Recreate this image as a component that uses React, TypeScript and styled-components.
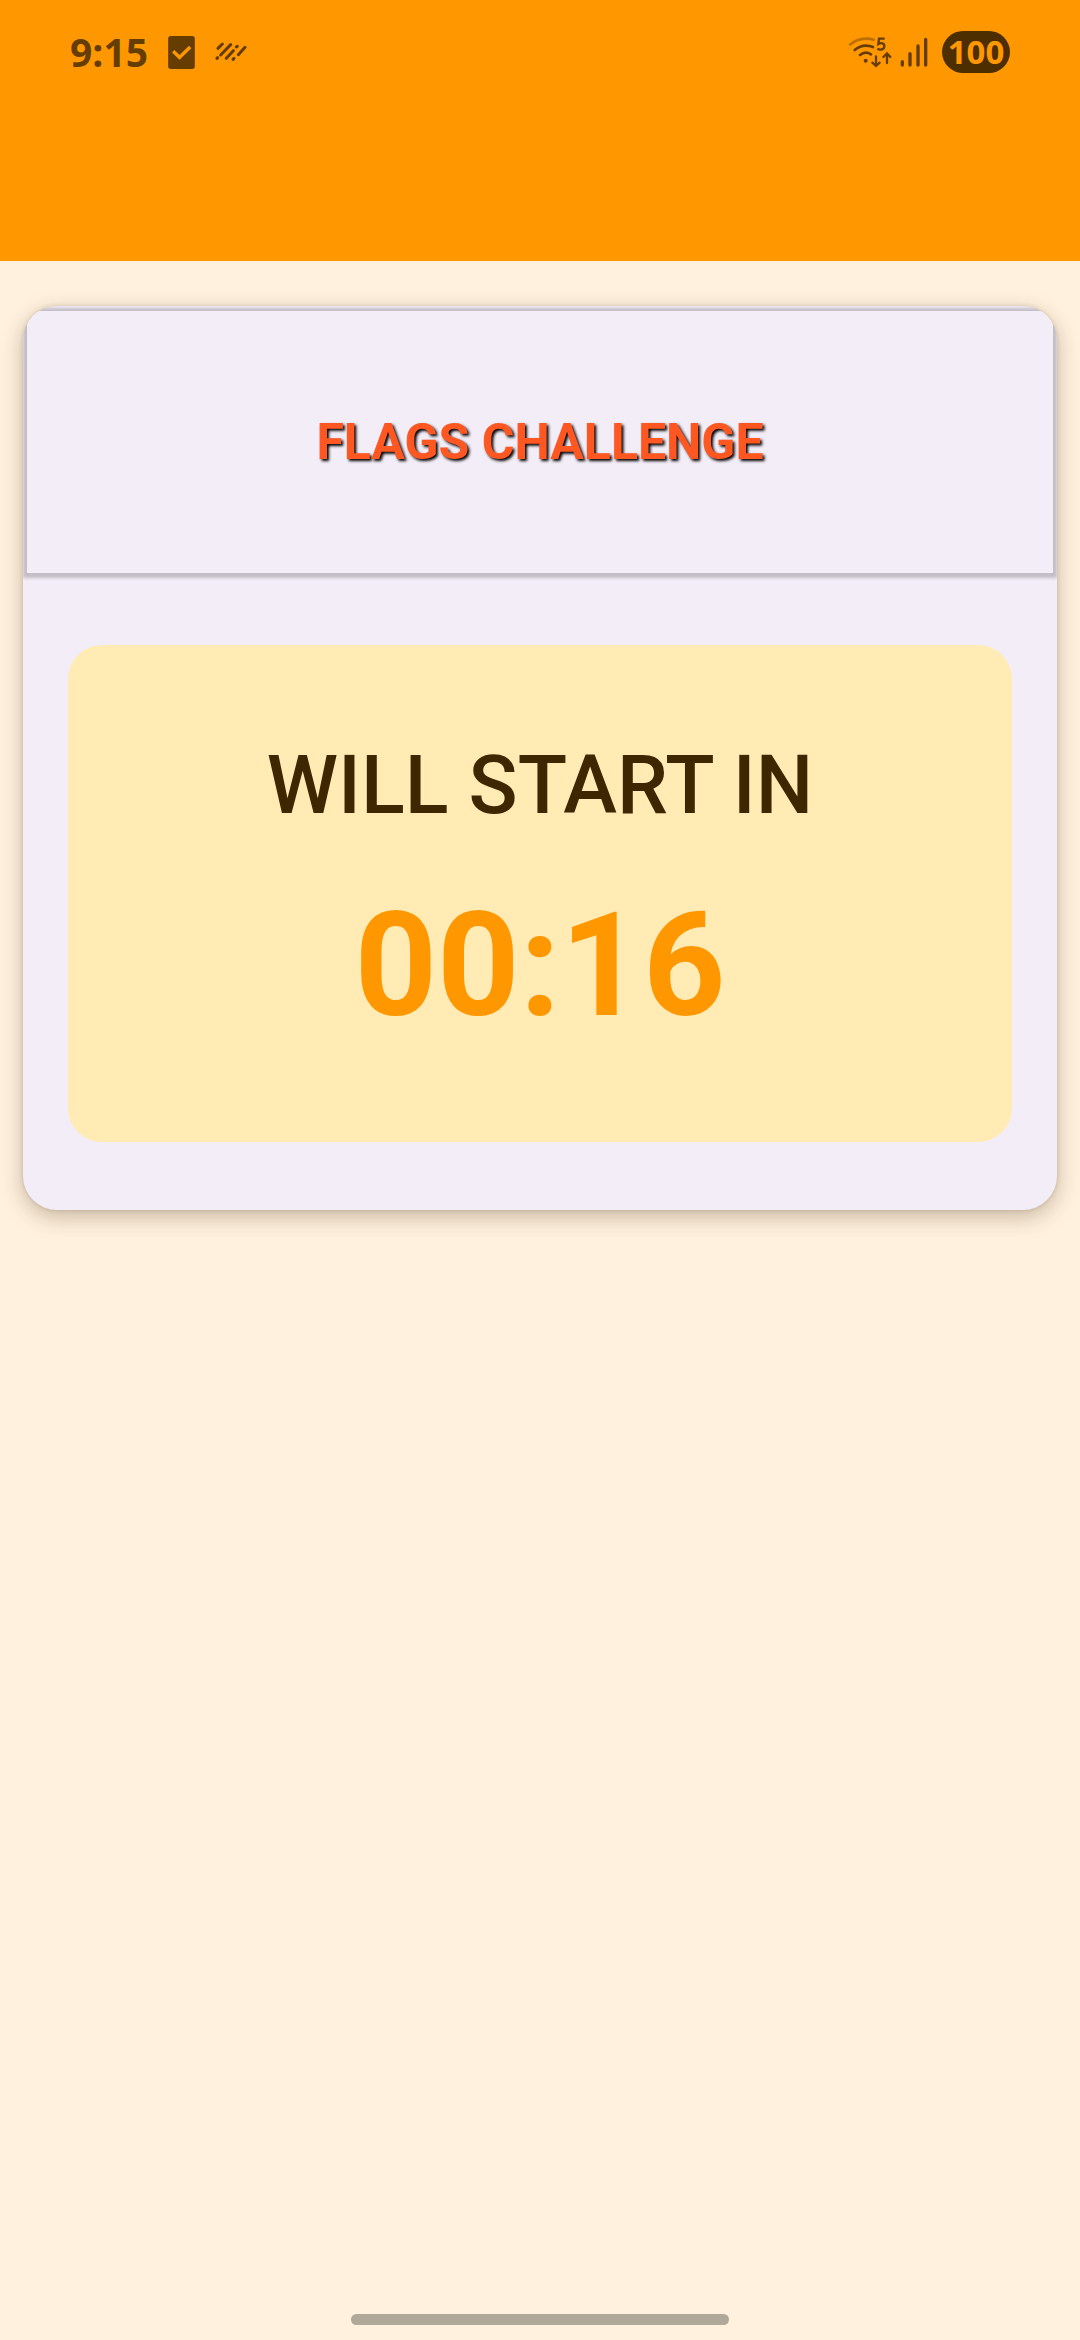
import React from "react";
import styled, { createGlobalStyle } from "styled-components";

const GlobalStyle = createGlobalStyle`
  * { box-sizing: border-box; }
  html, body, #root { height: 100%; }
  body { margin: 0; background: #fff1de; font-family: Roboto, sans-serif; }
`;

const Screen = styled.div`
  min-height: 100%;
  display: flex;
  flex-direction: column;
  background: #fff1de;
`;

const AppBar = styled.header`
  height: 261px;
  background: #ff9800;
`;

const StatusBar = styled.div`
  display: flex;
  align-items: center;
  justify-content: space-between;
  height: 104px;
  padding: 0 70px;
`;

const StatusGroup = styled.div<{ $gap: number }>`
  display: flex;
  align-items: center;
  gap: ${(p) => p.$gap}px;
  color: #663d00;
`;

const Clock = styled.time`
  font: 700 39px/44px "Open Sans", sans-serif;
`;

const Battery = styled.span`
  display: flex;
  align-items: center;
  justify-content: center;
  width: 68px;
  height: 42px;
  margin-left: 6px;
  border-radius: 21px;
  background: #4d2e00;
  color: #ff9800;
  font: 700 33px/42px "Open Sans", sans-serif;
`;

const Content = styled.main`
  flex: 1;
  padding: 45px 23px;
`;

const Card = styled.section`
  overflow: hidden;
  padding: 5px 0 68px;
  border-radius: 34px;
  background: #f3edf7;
  box-shadow: 0 7px 22px rgba(60, 40, 10, 0.28), 0 0 4px rgba(60, 40, 10, 0.16);
`;

const CardHeader = styled.div`
  display: flex;
  align-items: center;
  justify-content: center;
  height: 262px;
  margin: 0 4px;
  background: #f3edf7;
  box-shadow: 0 1px 3px 4px rgba(20, 15, 20, 0.21);
`;

const Title = styled.h1`
  margin: 0;
  color: #ff5722;
  font-size: 50px;
  font-weight: 700;
  line-height: 60px;
  text-shadow: 2px 2px 3px #000;
`;

const Panel = styled.div`
  display: flex;
  flex-direction: column;
  align-items: center;
  gap: 48px;
  margin: 72px 45px 0;
  padding: 93px 24px 92px;
  border-radius: 34px;
  background: #ffebb3;
`;

const Caption = styled.p`
  margin: 0;
  color: #3e2700;
  font-size: 81px;
  font-weight: 500;
  line-height: 96px;
`;

const Timer = styled.time`
  color: #ff9800;
  font-size: 144px;
  font-weight: 700;
  line-height: 168px;
`;

const NavArea = styled.footer`
  display: flex;
  justify-content: center;
  padding-bottom: 15px;
`;

const NavHandle = styled.div`
  width: 35%;
  height: 11px;
  border-radius: 6px;
  background: #b0a899;
`;

const TaskIcon = () => (
  <svg width="27" height="33" viewBox="0 0 80 99" aria-hidden="true">
    <rect width="80" height="99" rx="8" fill="currentColor" />
    <path d="M15 46 L34 64 L66 33" fill="none" stroke="#ff9800" strokeWidth="10" />
  </svg>
);

const StripesIcon = () => (
  <svg width="32" height="20" viewBox="494 101 96 60" aria-hidden="true">
    <g stroke="currentColor" strokeWidth="9" strokeLinecap="round">
      <path d="M503 120 L516 107 M500 150 L502 148 M511 140 L541 109 M528 150 L549 127 M558 116 L561 114 M548 153 L551 150 M564 139 L584 117" />
    </g>
  </svg>
);

const WifiIcon = () => (
  <svg width="44" height="32" viewBox="54 80 132 96" aria-hidden="true">
    <g fill="none" stroke="currentColor" strokeWidth="8" strokeLinecap="round">
      <path d="M58 108 Q90 79 134 92" opacity="0.45" strokeLinecap="butt" />
      <path d="M74 122 Q99 101 129 113" />
      <path d="M90 137 Q106 124 123 135" />
      <path d="M164 88 H147 L145 104 C153 99 164 102 163 111 C162 122 149 123 142 118" strokeWidth="7" strokeLinecap="butt" />
      <path d="M138 141 V169 M127 160 L138 170 L149 160 M171 161 V133 M160 143 L171 132 L181 143" strokeWidth="7" />
    </g>
    <circle cx="107" cy="154" r="6" fill="currentColor" />
  </svg>
);

const SignalIcon = () => (
  <svg width="28" height="30" viewBox="212 79 84 90" aria-hidden="true">
    <g stroke="currentColor" strokeWidth="10" strokeLinecap="round">
      <path d="M219 153 V163 M242 129 V163 M266 106 V163 M289 86 V163" />
    </g>
  </svg>
);

export default function App() {
  return (
    <>
      <GlobalStyle />
      <Screen>
        <AppBar>
          <StatusBar>
            <StatusGroup $gap={20}>
              <Clock>9:15</Clock>
              <TaskIcon />
              <StripesIcon />
            </StatusGroup>
            <StatusGroup $gap={8}>
              <WifiIcon />
              <SignalIcon />
              <Battery>100</Battery>
            </StatusGroup>
          </StatusBar>
        </AppBar>
        <Content>
          <Card>
            <CardHeader>
              <Title>FLAGS CHALLENGE</Title>
            </CardHeader>
            <Panel>
              <Caption>WILL START IN</Caption>
              <Timer>00:16</Timer>
            </Panel>
          </Card>
        </Content>
        <NavArea>
          <NavHandle />
        </NavArea>
      </Screen>
    </>
  );
}
